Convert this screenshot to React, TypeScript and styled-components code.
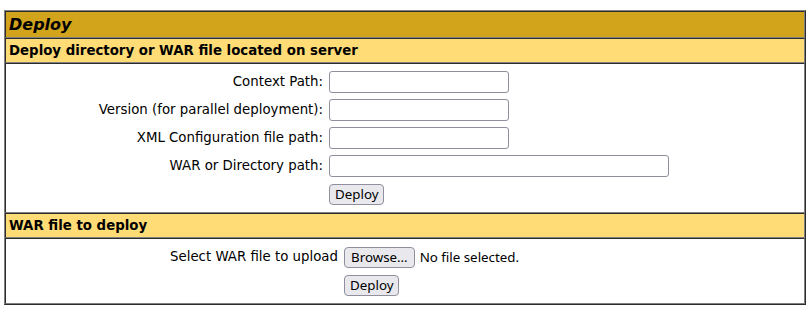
import React from "react";
import styled, { createGlobalStyle } from "styled-components";

const GlobalStyle = createGlobalStyle`
  html, body {
    margin: 0;
    padding: 0;
    background: #ffffff;
  }
  body {
    font-family: "DejaVu Sans", sans-serif;
    color: #000000;
  }
`;

const Page = styled.div`
  padding: 10px 4px 0 4px;
`;

const Panel = styled.div`
  width: 802px;
  box-sizing: border-box;
  border: 1px outset gray;
  display: flex;
  flex-direction: column;
`;

const Cell = styled.div<{ $bg?: string }>`
  border: 1px inset gray;
  padding: 3px;
  background: ${(p) => p.$bg ?? "#ffffff"};
`;

const TitleCell = styled(Cell)`
  font-family: "DejaVu Sans", sans-serif;
  font-size: 16px;
  line-height: 19px;
  font-weight: bold;
  font-style: italic;
`;

const HeaderCell = styled(Cell)`
  font-family: "DejaVu Sans", sans-serif;
  font-size: 13.333px;
  line-height: 17px;
  font-weight: bold;
`;

const FormGrid = styled.form<{ $labelWidth: number }>`
  margin: 0;
  padding: 2px;
  display: grid;
  grid-template-columns: ${(p) => p.$labelWidth}px 1fr;
  grid-auto-rows: 26px;
  gap: 2px;
`;

const LabelCell = styled.div`
  padding: 2px;
  text-align: right;
  font-family: "DejaVu Sans", sans-serif;
  font-size: 13.333px;
  line-height: 21px;
  color: #000;
  white-space: nowrap;
`;

const FieldCell = styled.div`
  padding: 2px;
  display: flex;
  align-items: center;
`;

const TextInput = styled.input<{ $w: number }>`
  box-sizing: border-box;
  width: ${(p) => p.$w}px;
  height: 22px;
  margin: 0;
  border: 1px solid #8f8f9d;
  border-radius: 3px;
  background: #ffffff;
  padding: 0 4px;
  font-family: "Noto Sans", sans-serif;
  font-size: 13.333px;
`;

const Button = styled.button<{ $padX?: number }>`
  box-sizing: border-box;
  height: 21px;
  margin: 0;
  padding: 0 ${(p) => p.$padX ?? 5}px;
  border: 1px solid #8f8f9d;
  border-radius: 4px;
  background: #e9e9ed;
  color: #000;
  font-family: "Noto Sans", sans-serif;
  font-size: 13.333px;
  line-height: 19px;
`;

const FileField = styled.div`
  display: flex;
  align-items: center;
  gap: 5px;
`;

const FileStatus = styled.span`
  font-family: "Noto Sans", sans-serif;
  font-size: 13.333px;
  color: #000;
`;

const fields = [
  { label: "Context Path:", w: 180 },
  { label: "Version (for parallel deployment):", w: 180 },
  { label: "XML Configuration file path:", w: 180 },
  { label: "WAR or Directory path:", w: 340 },
];

export default function App() {
  return (
    <>
      <GlobalStyle />
      <Page>
        <Panel>
          <TitleCell $bg="#D2A41C">Deploy</TitleCell>
          <HeaderCell $bg="#FFDC75">Deploy directory or WAR file located on server</HeaderCell>
          <Cell>
            <FormGrid $labelWidth={314} onSubmit={(e) => e.preventDefault()}>
              {fields.map((f) => (
                <React.Fragment key={f.label}>
                  <LabelCell>{f.label}</LabelCell>
                  <FieldCell>
                    <TextInput type="text" $w={f.w} />
                  </FieldCell>
                </React.Fragment>
              ))}
              <LabelCell>&nbsp;</LabelCell>
              <FieldCell>
                <Button type="submit">Deploy</Button>
              </FieldCell>
            </FormGrid>
          </Cell>
          <HeaderCell $bg="#FFDC75">WAR file to deploy</HeaderCell>
          <Cell>
            <FormGrid $labelWidth={329} onSubmit={(e) => e.preventDefault()}>
              <LabelCell>Select WAR file to upload</LabelCell>
              <FieldCell>
                <FileField>
                  <Button type="button" $padX={6}>Browse…</Button>
                  <FileStatus>No file selected.</FileStatus>
                </FileField>
              </FieldCell>
              <LabelCell>&nbsp;</LabelCell>
              <FieldCell>
                <Button type="submit">Deploy</Button>
              </FieldCell>
            </FormGrid>
          </Cell>
        </Panel>
      </Page>
    </>
  );
}
